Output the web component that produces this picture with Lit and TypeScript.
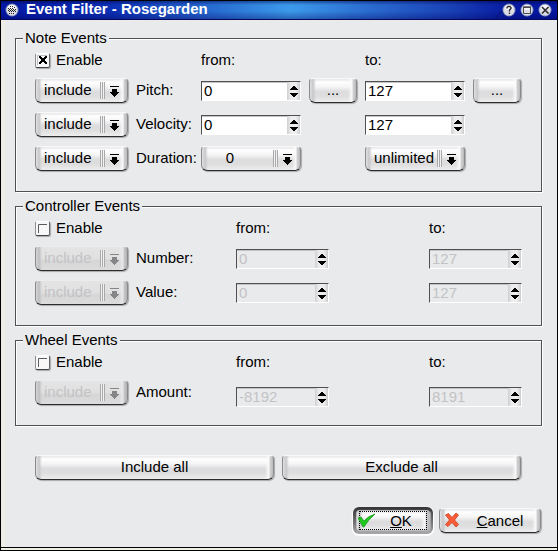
import { LitElement, html, css, svg, nothing } from "lit";
import { customElement, property } from "lit/decorators.js";
import { classMap } from "lit/directives/class-map.js";

const face = css`
  .face {
    box-sizing: border-box;
    margin: 0;
    border: 1px solid #8a8a8c;
    border-top-color: #f8f8f8;
    border-bottom-color: #2c2c2e;
    border-radius: 4px 4px 6px 6px;
    background:
      linear-gradient(90deg, #e2e2e4, #c8c8ca 3px, rgba(240, 240, 241, 0) 6px),
      linear-gradient(270deg, #bababc, #d2d2d4 3px, #fafafa 4px, rgba(250, 250, 250, 0) 8px),
      linear-gradient(#ececee 0 1px, #ffffff 3px, #f4f4f5 35%, #dcdcde 55%, #dededf 75%, #ededee);
    box-shadow: 1px 1px 1px #a9a9ab;
    font: inherit;
    color: #000;
  }
`;

@customElement("combo-box")
export class ComboBox extends LitElement {
  static styles = [
    face,
    css`
      :host { display: block; min-width: 0; }
      .combo { display: grid; grid-template-columns: minmax(0, 1fr) 34px; }
      .select {
        grid-area: 1 / 1 / 2 / 3;
        appearance: none;
        width: 100%;
        height: 25px;
        padding: 0 26px 3px 8px;
        outline: none;
      }
      .centered { padding: 0 42px 3px 0; text-align: center; text-align-last: center; }
      .select:disabled {
        opacity: 1;
        color: #c3c3c5;
        background:
          linear-gradient(90deg, #d6d6d8, #bebec0 3px, rgba(228, 228, 229, 0) 6px),
          linear-gradient(270deg, #b2b2b4, #c8c8ca 3px, #e8e8e9 4px, rgba(232, 232, 233, 0) 8px),
          linear-gradient(#e4e4e5, #e0e0e1 50%, #d6d6d7 60%, #dcdcdd);
        border-top-color: #ececec;
      }
      .mark { grid-area: 1 / 2; pointer-events: none; z-index: 1; }
      .faded { color: #858587; }
    `,
  ];
  @property() label = "";
  @property() value = "";
  @property({ type: Array }) options: string[] = [];
  @property({ type: Boolean }) disabled = false;
  @property({ type: Boolean }) centered = false;

  render() {
    return html`<div class="combo">
      <select class=${classMap({ select: true, face: true, centered: this.centered })}
        aria-label=${this.label} ?disabled=${this.disabled}>
        ${this.options.map((o) => html`<option ?selected=${o === this.value}>${o}</option>`)}
      </select>
      <svg class=${classMap({ mark: true, faded: this.disabled })} width="34" height="25" viewBox="0 0 34 25" aria-hidden="true">
        <path d="M6.5 4v17M8.5 4v17M10.5 4v17" stroke="#a9a9ab" />
        <path d="M7.5 4v17M9.5 4v17" stroke="#f2f2f3" />
        <path d="M16 8h9v1h-9zM18 11h5v3h2v1h-1v1h-1v1h-1v1h-1v1h-1v-1h-1v-1h-1v-1h-1v-1h-1v-1h2z" fill="currentColor" />
      </svg>
    </div>`;
  }
}

@customElement("spin-box")
export class SpinBox extends LitElement {
  static styles = css`
    :host { display: block; min-width: 0; }
    .spin {
      box-sizing: border-box;
      display: flex;
      height: 20px;
      border: 1px solid #fff;
      border-top-color: #505052;
      border-left-color: #505052;
      background: #fff;
      box-shadow: inset 0 1px 0 #c4c4c6;
    }
    .input {
      appearance: textfield;
      flex: 1;
      min-width: 0;
      padding: 0 0 1px 2px;
      border: 0;
      outline: none;
      background: none;
      font: inherit;
      color: #000;
    }
    .input::-webkit-inner-spin-button { appearance: none; margin: 0; }
    .off { background: #e9eaec; }
    .off .input { color: #c3c3c5; }
    .steps {
      display: grid;
      grid-template-rows: 1fr 1fr;
      width: 13px;
      background: linear-gradient(90deg, #cfcfd1, #ededee 30%, #ededee 70%, #cbcbcd);
    }
    .step { display: grid; place-items: center; padding: 0; border: 0; background: none; }
  `;
  @property() label = "";
  @property() value = "";
  @property({ type: Boolean }) disabled = false;

  private step(by: number) {
    this.value = String(Number(this.value) + by);
  }

  render() {
    return html`<div class=${classMap({ spin: true, off: this.disabled })}>
      <input class="input" type="number" aria-label=${this.label} .value=${this.value} ?disabled=${this.disabled} />
      <div class="steps">
        <button class="step" aria-label="Increase" ?disabled=${this.disabled} @click=${() => this.step(1)}>
          <svg width="9" height="9" viewBox="0 0 9 9"><path d="M4 4h2v1h1v1h1v1h1v1H1V7h1V6h1V5h1z" fill="#000" /></svg>
        </button>
        <button class="step" aria-label="Decrease" ?disabled=${this.disabled} @click=${() => this.step(-1)}>
          <svg width="9" height="9" viewBox="0 0 9 9"><path d="M1 2h8v1H8v1H7v1H6v1H4V5H3V4H2V3H1z" fill="#000" /></svg>
        </button>
      </div>
    </div>`;
  }
}

const orb = (glyph: unknown) => html`<svg width="14" height="14" viewBox="0 0 14 14" aria-hidden="true">
  <circle cx="7" cy="7" r="6.5" fill="#7f8db8" />
  <circle cx="7" cy="7" r="5.6" fill="#dcdce6" />
  <ellipse cx="7" cy="4.5" rx="4" ry="2.5" fill="#f6f6fa" />
  ${glyph}
</svg>`;

const includeOptions = ["include", "exclude"];

interface Row { name: string; from: string; to: string; }

@customElement("app-root")
export class AppRoot extends LitElement {
  static styles = [
    face,
    css`
      :host {
        display: block;
        font: 15px/17px "Liberation Sans", Arial, sans-serif;
        color: #000;
      }
      .window {
        box-sizing: border-box;
        min-height: 100vh;
        border: 1px solid #000;
        background: #eeefe4;
        display: flex;
        flex-direction: column;
      }
      .title {
        display: flex;
        align-items: center;
        height: 19px;
        box-sizing: border-box;
        padding: 0 5px 0 4px;
        border-bottom: 1px solid #06065c;
        background:
          linear-gradient(rgba(0, 0, 70, 0.45), rgba(0, 0, 70, 0) 4px, rgba(0, 0, 70, 0) 10px, rgba(0, 0, 90, 0.35)),
          linear-gradient(90deg, #0418a4, #0c30b4 20%, #2a72d4 40%, #3c9aea 52%, #2a6cd0 66%, #1a44b8 80%, #0618a0 92%, #0418a0);
        color: #fff;
      }
      .caption {
        flex: 1;
        margin: 0;
        padding: 0 0 2px 7px;
        font-size: 15px;
        line-height: 16px;
        font-weight: bold;
        white-space: nowrap;
      }
      .trace { margin-right: -1px; }
      .tools { display: flex; gap: 4px; }
      .tool { display: block; padding: 0; border: 0; background: none; line-height: 0; }
      .body {
        flex: 1;
        padding: 10px 15px 13px 14px;
        border-bottom: 1px solid #000;
        margin-bottom: 2px;
        background: linear-gradient(90deg, #eeede6 0 4px, #e9eaec 4px);
      }
      .group {
        margin: 0 0 6px;
        min-width: 0;
        padding: 4px 19px 20px;
        border: 1px solid #505052;
        box-shadow: 1px 1px 0 #fff, inset 1px 1px 0 #fff;
      }
      .legend { margin-left: -12px; padding: 0 2px; height: 17px; line-height: 16px; background: #e9eaec; }
      .grid { display: grid; gap: 9px 8px; }
      .notes { grid-template-columns: 93px 57px minmax(0, 1fr) 48px minmax(0, 1fr) 49px; }
      .plain { grid-template-columns: 93px 92px 93px minmax(0, 1fr) 93px; }
      .head { height: 18px; line-height: 18px; }
      .mode { grid-column: 1; }
      .from { grid-column: 3; }
      .to { grid-column: 5; }
      .enable { display: flex; align-items: center; gap: 6px; }
      .check { display: grid; width: 15px; height: 15px; }
      .box {
        grid-area: 1 / 1;
        appearance: none;
        box-sizing: border-box;
        width: 15px;
        height: 15px;
        margin: 0;
        border: 1px solid #909092;
        border-top-color: #fff;
        border-bottom-color: #444446;
        border-right-color: #68686a;
        border-radius: 2px;
        background: #f8f8f9;
        box-shadow: 1px 1px 1px #aaaaac;
      }
      .tick { grid-area: 1 / 1; pointer-events: none; z-index: 1; }
      .name { align-self: center; padding-bottom: 2px; white-space: nowrap; }
      .spin { align-self: center; padding-top: 1px; }
      .low { align-self: end; margin-bottom: -2px; }
      .push { height: 25px; padding: 0 0 2px; }
      .more { width: 48px; }
      .bulk { display: grid; grid-template-columns: 1fr 1fr; gap: 8px; margin: 29px 21px 27px 20px; }
      .actions { display: flex; justify-content: flex-end; align-items: center; gap: 6px; padding-right: 1px; }
      .default {
        padding: 3px;
        border-radius: 6px;
        background: linear-gradient(#343436, #6c6c6e 50%, #a8a8aa);
        box-shadow: 0 1px 1px 1px #fff;
      }
      .action { display: flex; align-items: center; }
      .ok { width: 74px; height: 21px; padding: 0; border-radius: 3px; border-color: #bbbbbd; }
      .focus { flex: 1; display: flex; align-items: center; height: 17px; border: 1px dotted #000; margin: 0 2px; }
      .mark { margin-left: -2px; }
      .cancel { width: 102px; padding: 0 0 1px 4px; }
      .action-text { flex: 1; text-align: center; }
    `,
  ];

  private check(on: boolean) {
    return html`<label class="enable head">
      <span class="check">
        <input class="box" type="checkbox" .checked=${on} />
        <svg class="tick" width="15" height="15" viewBox="0 0 15 15" aria-hidden="true">
          ${on
            ? svg`<path d="M2.5 12V2.5H12" fill="none" stroke="#bcbcbe" />
              <path d="M4 3h2v1h1v1h2V4h1V3h2v2h-1v1h-1v2h1v1h1v2h-2v-1H9V9H7v1H6v1H4V9h1V8h1V6H5V5H4z" fill="#000" />`
            : svg`<path d="M3.5 12V3.5H12" fill="none" stroke="#5c5c5e" />`}
        </svg>
      </span>
      Enable
    </label>`;
  }

  private head(on: boolean) {
    return html`${this.check(on)}
      <span class="head from">from:</span>
      <span class="head to">to:</span>`;
  }

  private noteRow(r: Row) {
    const more = (side: string) => r.name === "Pitch"
      ? html`<button class="face push more" aria-label="Choose ${side} pitch">...</button>`
      : nothing;
    return html`<combo-box class="mode" label="${r.name} mode" value="include" .options=${includeOptions}></combo-box>
      <span class="name">${r.name}:</span>
      <spin-box class="spin from" label="${r.name} from" value=${r.from}></spin-box>
      ${more("lowest")}
      <spin-box class="spin to" label="${r.name} to" value=${r.to}></spin-box>
      ${more("highest")}`;
  }

  private plainGroup(title: string, rows: Row[], low = false) {
    const spin = (side: string) => classMap({ spin: true, low, [side]: true });
    return html`<fieldset class="group">
      <legend class="legend">${title}</legend>
      <div class="grid plain">
        ${this.head(false)}
        ${rows.map((r) => html`
          <combo-box class="mode" disabled label="${r.name} mode" value="include" .options=${includeOptions}></combo-box>
          <span class="name">${r.name}:</span>
          <spin-box disabled class=${spin("from")} label="${r.name} from" value=${r.from}></spin-box>
          <spin-box disabled class=${spin("to")} label="${r.name} to" value=${r.to}></spin-box>`)}
      </div>
    </fieldset>`;
  }

  render() {
    return html`<main class="window">
      <header class="title">
        ${orb(svg`<path d="M5 3h1v1H5zM7 3h1v1H7zM9 4h1v1H9zM3 5h1v1H3zM5 5h1v1H5zM7 5h1v1H7zM4 6h1v1H4zM6 6h1v1H6zM8 6h1v1H8zM10 6h1v1h-1zM3 7h1v1H3zM5 7h1v1H5zM7 7h1v1H7zM9 7h1v1H9zM4 8h1v1H4zM6 8h1v1H6zM8 8h1v1H8zM10 8h1v1h-1zM4 10h1v1H4zM6 10h1v1H6zM8 10h1v1H8z" fill="#222" />`)}
        <h1 class="caption">Event Filter - Rosegarden</h1>
        <svg class="trace" width="7" height="18" viewBox="0 0 7 18" aria-hidden="true"><path d="M0 17L5 10.5H7" fill="none" stroke="#061070" /></svg>
        <div class="tools">
          <button class="tool" aria-label="Help">${orb(svg`<path d="M5 5.5V4.5L6 3.5H8L9 4.5V5.5L7.5 7V8.5M7.5 9.5V11" fill="none" stroke="#2c2c30" stroke-width="1.4" />`)}</button>
          <button class="tool" aria-label="Maximize">${orb(svg`<path d="M3.5 4h7v6.5h-7z" fill="none" stroke="#4a4a50" /><path d="M3 3.5h8v1.5H3z" fill="#4a4a50" />`)}</button>
          <button class="tool" aria-label="Close">${orb(svg`<path d="M4 4l6.5 6.5M10.5 4L4 10.5" fill="none" stroke="#2c2c30" stroke-width="1.6" />`)}</button>
        </div>
      </header>
      <div class="body">
        <fieldset class="group">
          <legend class="legend">Note Events</legend>
          <div class="grid notes">
            ${this.head(true)}
            ${[{ name: "Pitch", from: "0", to: "127" }, { name: "Velocity", from: "0", to: "127" }].map((r) => this.noteRow(r))}
            <combo-box class="mode" label="Duration mode" value="include" .options=${includeOptions}></combo-box>
            <span class="name">Duration:</span>
            <combo-box class="from" centered label="Duration from" value="0" .options=${["0"]}></combo-box>
            <combo-box class="to" label="Duration to" value="unlimited" .options=${["unlimited"]}></combo-box>
          </div>
        </fieldset>
        ${this.plainGroup("Controller Events", [{ name: "Number", from: "0", to: "127" }, { name: "Value", from: "0", to: "127" }])}
        ${this.plainGroup("Wheel Events", [{ name: "Amount", from: "-8192", to: "8191" }], true)}
        <div class="bulk">
          <button class="face push">Include all</button>
          <button class="face push">Exclude all</button>
        </div>
        <div class="actions">
          <div class="default">
            <button class="face action ok">
              <span class="focus">
                <svg class="mark" width="18" height="15" viewBox="0 0 18 15" aria-hidden="true"><path d="M0 5L3 4L6 8Q10 3 17 1Q10 7 6 14H5Z" fill="#1fc81f" stroke="#0b8a0b" stroke-width=".6" /></svg>
                <span class="action-text"><u>O</u>K</span>
              </span>
            </button>
          </div>
          <button class="face push action cancel">
            <svg width="16" height="16" viewBox="0 0 16 16" aria-hidden="true"><path d="M1.5 3L4.5 1.5L8 5.5L12 1L14.5 3L10.5 8L14.5 12.5L12 15L8 10.5L4 14.5L1.5 12.5L5.5 8Z" fill="#fb5a38" stroke="#c8401c" stroke-width=".8" /></svg>
            <span class="action-text"><u>C</u>ancel</span>
          </button>
        </div>
      </div>
    </main>`;
  }
}
